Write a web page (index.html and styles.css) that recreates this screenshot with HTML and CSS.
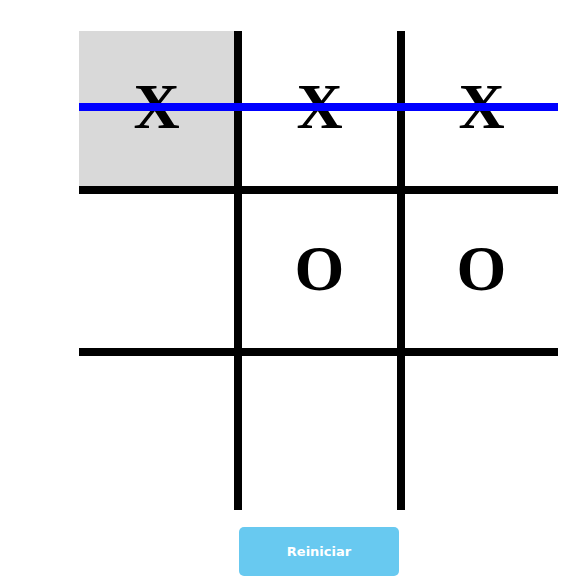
FILE: index.html
```html
<!DOCTYPE html>
<html lang="es">
<head>
<meta charset="utf-8">
<title>Tres en raya</title>
<link rel="stylesheet" href="styles.css">
</head>
<body>
<div class="game">
  <div class="board">
    <div class="cell win">X</div>
    <div class="cell">X</div>
    <div class="cell">X</div>
    <div class="cell"></div>
    <div class="cell">O</div>
    <div class="cell">O</div>
    <div class="cell"></div>
    <div class="cell"></div>
    <div class="cell"></div>
    <div class="strike"></div>
  </div>
  <button class="reset">Reiniciar</button>
</div>
</body>
</html>
```
FILE: styles.css
```css
html, body {
  margin: 0;
  padding: 0;
  background: #ffffff;
}
.game {
  padding: 31px 0 0 79px;
  display: flex;
  flex-direction: column;
  align-items: flex-start;
}
.board {
  position: relative;
  width: 479px;
  display: grid;
  grid-template-columns: 155px 155px 153px;
  grid-template-rows: 155px 154px 154px;
  gap: 8px;
  background: #000000;
}
.cell {
  background: #ffffff;
  display: flex;
  align-items: center;
  justify-content: center;
  padding-bottom: 4px;
  font-family: "Liberation Serif", "Times New Roman", serif;
  font-size: 64px;
  font-weight: bold;
  line-height: 1;
  color: #000000;
}
.cell.win {
  background: #d9d9d9;
}
.strike {
  position: absolute;
  left: 0;
  right: 0;
  top: 72px;
  height: 8px;
  background: #0000ff;
}
.reset {
  margin: 17px 0 0 160px;
  width: 160px;
  height: 49px;
  border: none;
  border-radius: 5px;
  background: #68c9f0;
  color: #ffffff;
  font-family: "DejaVu Sans", Verdana, sans-serif;
  font-weight: bold;
  font-size: 13px;
  cursor: pointer;
}
```
